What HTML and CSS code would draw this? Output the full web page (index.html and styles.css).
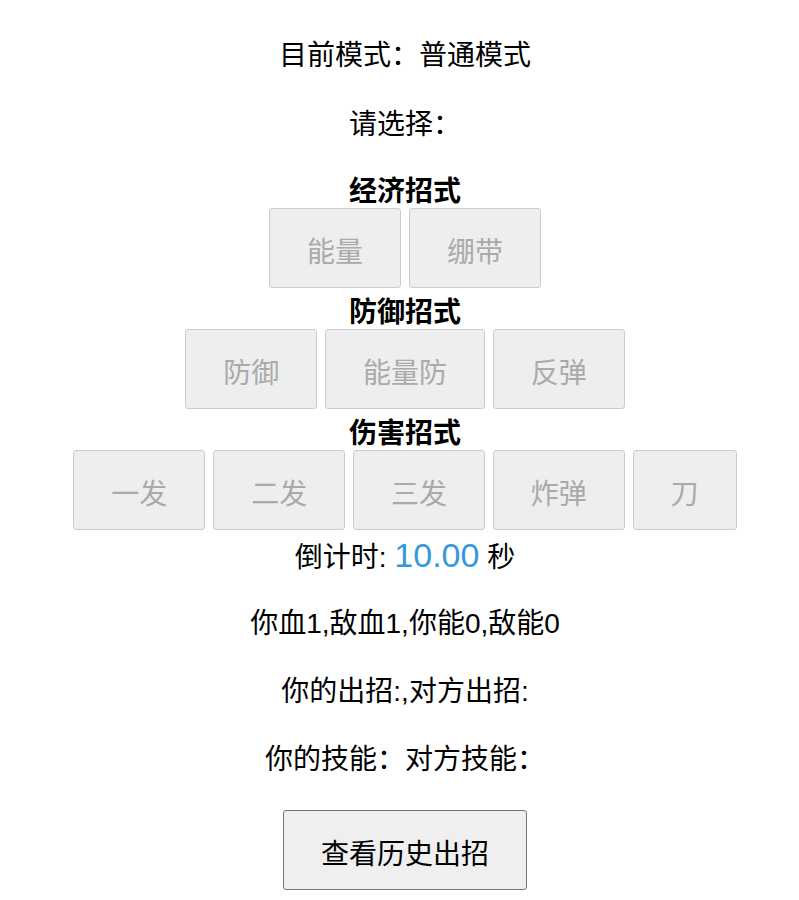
FILE: index.html
```html
<!DOCTYPE html>
<html lang="zh-CN">
<head>
<meta charset="utf-8">
<title>招式</title>
<link rel="stylesheet" href="styles.css">
</head>
<body>
<div class="page">
  <p class="line mode">目前模式：普通模式</p>
  <p class="line prompt">请选择：</p>
  <div class="group">
    <div class="group-title">经济招式</div>
    <div class="row">
      <button class="move" disabled>能量</button>
      <button class="move" disabled>绷带</button>
    </div>
  </div>
  <div class="group">
    <div class="group-title">防御招式</div>
    <div class="row">
      <button class="move" disabled>防御</button>
      <button class="move" disabled>能量防</button>
      <button class="move" disabled>反弹</button>
    </div>
  </div>
  <div class="group">
    <div class="group-title">伤害招式</div>
    <div class="row">
      <button class="move" disabled>一发</button>
      <button class="move" disabled>二发</button>
      <button class="move" disabled>三发</button>
      <button class="move" disabled>炸弹</button>
      <button class="move" disabled>刀</button>
    </div>
  </div>
  <div class="line countdown">倒计时: <span class="timer">10.00</span> 秒</div>
  <p class="line stat">你血1,敌血1,你能0,敌能0</p>
  <p class="line stat">你的出招:,对方出招:</p>
  <p class="line skills">你的技能：对方技能：</p>
  <div class="actions">
    <button class="history">查看历史出招</button>
  </div>
</div>
</body>
</html>
```
FILE: styles.css
```css
html, body {
  margin: 0;
  padding: 0;
  background: #ffffff;
}
body {
  font-family: "Liberation Sans", "Noto Sans CJK SC", sans-serif;
  font-size: 28px;
  color: #000000;
}
.page {
  padding: 33px 0 0 11px;
  text-align: center;
}
.line {
  box-sizing: border-box;
  margin: 0;
  padding-top: 3px;
  line-height: 40px;
  height: 40px;
}
.mode { margin-bottom: 29px; }
.prompt { margin-bottom: 27px; }
.group-title {
  box-sizing: border-box;
  font-weight: bold;
  padding-top: 3px;
  line-height: 39px;
  height: 39px;
}
.row {
  display: flex;
  justify-content: center;
  gap: 7.8px;
  margin-bottom: 2px;
}
button {
  font-family: "Liberation Sans", "Noto Sans CJK SC", sans-serif;
  font-size: 28px;
  height: 80px;
  padding: 4px 37px 0;
  border-radius: 3px;
  margin: 0;
}
.move {
  background: #eeeeee;
  border: 1px solid #cccccc;
  color: #aaaaaa;
}
.timer {
  color: #3498db;
  font-size: 34px;
}
.countdown { margin-bottom: 29px; }
.stat { margin-bottom: 28px; }
.skills { margin-bottom: 33px; }
.actions {
  display: flex;
  justify-content: center;
}
.history {
  background: #efefef;
  border: 1px solid #767676;
  color: #000000;
}
```
